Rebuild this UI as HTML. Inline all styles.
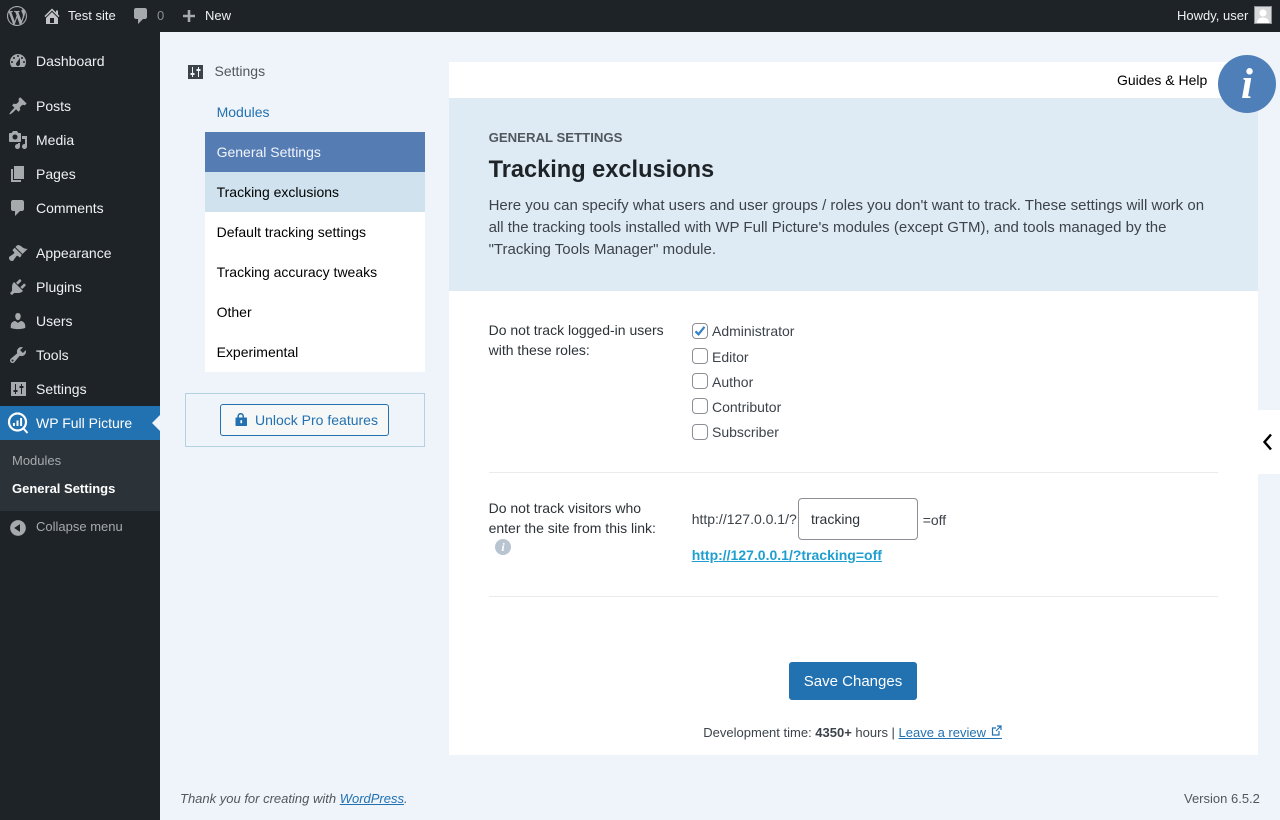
<!DOCTYPE html>
<html><head><meta charset="utf-8"><title>WP Full Picture</title>
<style>
*{box-sizing:border-box}
html,body{margin:0;padding:0}
body{width:1280px;height:820px;position:relative;overflow:hidden;background:#eff4fb;font-family:"Liberation Sans",sans-serif;font-size:14px;color:#3c434a}
.a{position:absolute;white-space:nowrap}
.t{position:absolute;white-space:nowrap;line-height:20px}
svg{position:absolute;display:block}
.bar{color:#f0f0f1;font-size:13px}
.m{color:#f0f0f1;font-size:14px;left:36px}
.r{position:absolute;left:205px;width:220px;height:40px;line-height:40px;padding-left:11.6px;background:#fff;color:#000;font-size:14px}
.cb{position:absolute;left:692px;width:16px;height:16px;border:1px solid #8c8f94;border-radius:4px;background:#fff}
.l{left:712px;color:#3c434a;font-size:14px}
</style></head><body>
<div class="a" style="left:0;top:0;width:1280px;height:32px;background:#1d2327"></div>
<div class="a" style="left:0;top:32px;width:160px;height:788px;background:#1d2327"></div>
<div class="a" style="left:0;top:406px;width:160px;height:34px;background:#2271b1"></div>
<div class="a" style="left:0;top:440px;width:160px;height:71px;background:#2c3338"></div>
<div class="a" style="left:152px;top:415px;width:0;height:0;border:8px solid transparent;border-left:0;border-right-color:#eff4fb"></div>

<svg style="left:7px;top:6px" width="20" height="20" viewBox="0 0 20 20" fill="#a7aaad"><path d="M20 10c0-5.51-4.49-10-10-10C4.48 0 0 4.49 0 10c0 5.52 4.48 10 10 10 5.51 0 10-4.48 10-10zM7.78 15.37L4.37 6.22c.55-.02 1.17-.08 1.17-.08.5-.06.44-1.13-.06-1.11 0 0-1.45.11-2.37.11-.18 0-.37 0-.58-.01C4.12 2.69 6.87 1.11 10 1.11c2.33 0 4.45.87 6.05 2.34-.68-.11-1.65.39-1.65 1.58 0 .74.45 1.36.9 2.1.35.61.55 1.36.55 2.46 0 1.49-1.4 5-1.4 5l-3.03-8.37c.54-.02.82-.17.82-.17.5-.05.44-1.25-.06-1.22 0 0-1.44.12-2.38.12-.87 0-2.33-.12-2.33-.12-.5-.03-.56 1.2-.06 1.22l.92.08 1.26 3.41zM17.41 10c.24-.64.74-1.87.43-4.25.7 1.29 1.05 2.71 1.05 4.25 0 3.29-1.73 6.24-4.4 7.78.97-2.59 1.94-5.2 2.92-7.78zM6.1 18.09C3.12 16.65 1.11 13.53 1.11 10c0-1.3.23-2.48.72-3.59C3.25 10.3 4.67 14.2 6.1 18.09zm4.03-6.63l2.58 6.98c-.86.29-1.76.45-2.71.45-.79 0-1.57-.11-2.29-.33.81-2.38 1.62-4.74 2.42-7.1z"/></svg>
<svg style="left:42px;top:6px" width="20" height="20" viewBox="0 0 20 20" fill="#c3c4c7"><path d="M16 8.5l1.53 1.53-1.06 1.06L10 4.62l-6.47 6.47-1.06-1.06L10 2.5l4 4v-2h2v4zm-6-2.46l6 5.99V18H4v-5.97zM12 17v-5H8v5h4z"/></svg>
<div class="t bar" style="left:68px;top:6px">Test site</div>
<svg style="left:131px;top:6px" width="20" height="20" viewBox="0 0 20 20" fill="#a7aaad"><path d="M5 2h9c1.1 0 2 .9 2 2v7c0 1.1-.9 2-2 2h-2l-5 5v-5H5c-1.1 0-2-.9-2-2V4c0-1.1.9-2 2-2z"/></svg>
<div class="t bar" style="left:157px;top:6px;color:#8c8f94">0</div>
<svg style="left:179px;top:6px" width="20" height="20" viewBox="0 0 20 20" fill="#a7aaad"><path d="M4 8.7h4.7V4h2.6v4.7H16v2.600h-4.7V16H8.700v-4.700H4z"/></svg>
<div class="t bar" style="left:205px;top:6px">New</div>
<div class="t bar" style="left:1177px;top:6px">Howdy, user</div>
<div class="a" style="left:1254px;top:6px;width:18px;height:18px;background:#d8d8d8;border:1px solid #8c8f94;overflow:hidden"></div>
<svg style="left:1255px;top:7px" width="16" height="16" viewBox="0 0 16 16" fill="#fff"><circle cx="8" cy="6" r="3.600"/><path d="M2 16c0-4 3-5.500 6-5.500s6 1.500 6 5.500z"/></svg>

<svg style="left:8px;top:51px" width="20" height="20" viewBox="0 0 20 20" fill="#a7aaad"><path fill-rule="evenodd" d="M3.76 16h12.48c1.1-1.37 1.76-3.11 1.76-5 0-4.42-3.58-8-8-8s-8 3.58-8 8c0 1.89.66 3.63 1.76 5zM10 4c.55 0 1 .45 1 1s-.45 1-1 1-1-.45-1-1 .45-1 1-1zM6 6c.55 0 1 .45 1 1s-.45 1-1 1-1-.45-1-1 .45-1 1-1zm8 0c.55 0 1 .45 1 1s-.45 1-1 1-1-.45-1-1 .45-1 1-1zm-5.370 5.550L12 7v6c0 1.100-.9 2-2 2s-2-.9-2-2c0-.57.24-1.080.63-1.450zM4 10c.55 0 1 .45 1 1s-.45 1-1 1-1-.45-1-1 .45-1 1-1zm12 0c.55 0 1 .45 1 1s-.45 1-1 1-1-.45-1-1 .45-1 1-1z"/></svg>
<div class="t m" style="top:51px">Dashboard</div>
<svg style="left:8px;top:96px" width="20" height="20" viewBox="0 0 20 20" fill="#a7aaad"><path d="M10.440 3.020l1.820-1.820 6.360 6.350-1.830 1.820c-1.050-.68-2.480-.57-3.410.36l-.75.75c-.92.93-1.040 2.350-.35 3.410l-1.830 1.820-2.410-2.410-2.800 2.790c-.42.42-3.380 2.710-3.800 2.290s1.860-3.390 2.280-3.810l2.790-2.790L4.100 9.360l1.830-1.820c1.050.69 2.480.57 3.400-.36l.75-.75c.93-.92 1.050-2.350.36-3.410z"/></svg>
<div class="t m" style="top:96px">Posts</div>
<svg style="left:8px;top:130px" width="20" height="20" viewBox="0 0 20 20" fill="#a7aaad"><path fill-rule="evenodd" d="M13 11V4c0-.55-.45-1-1-1h-1.670L9 1H5L3.670 3H2c-.55 0-1 .45-1 1v7c0 .55.45 1 1 1h10c.55 0 1-.45 1-1zM7 4.500c1.380 0 2.500 1.120 2.500 2.500S8.380 9.500 7 9.500 4.500 8.380 4.500 7 5.620 4.500 7 4.500zM14 6h5v10.500c0 1.380-1.120 2.500-2.500 2.500S14 17.880 14 16.500s1.120-2.500 2.500-2.500c.17 0 .34.02.5.05V9h-3V6zm-4 8.050V13h2v3.500c0 1.380-1.120 2.500-2.500 2.500S7 17.880 7 16.500 8.120 14 9.500 14c.17 0 .34.02.5.05z"/></svg>
<div class="t m" style="top:130px">Media</div>
<svg style="left:8px;top:164px" width="20" height="20" viewBox="0 0 20 20" fill="#a7aaad"><path d="M6 15V2h10v13H6zm-1 1h8v2H3V5h2v11z"/></svg>
<div class="t m" style="top:164px">Pages</div>
<svg style="left:8px;top:198px" width="20" height="20" viewBox="0 0 20 20" fill="#a7aaad"><path d="M5 2h9c1.100 0 2 .9 2 2v7c0 1.100-.9 2-2 2h-2l-5 5v-5H5c-1.100 0-2-.9-2-2V4c0-1.100.9-2 2-2z"/></svg>
<div class="t m" style="top:198px">Comments</div>
<svg style="left:8px;top:243px" width="20" height="20" viewBox="0 0 20 20" fill="#a7aaad"><path d="M14.480 11.060L7.410 3.990l1.500-1.500c.5-.56 2.300-.47 3.510.32 1.210.8 1.430 1.280 2.910 2.100 1.180.64 2.450 1.260 4.450.85zm-.71.71L6.700 4.700 4.930 6.470c-.39.39-.39 1.020 0 1.410l1.060 1.060c.39.39.39 1.030 0 1.420-.6.6-1.430 1.110-2.210 1.690-.35.26-.7.53-1.010.84C1.430 13.230.99 14.200.99 15c0 1.500 1.500 3 3 3 .8 0 1.770-.44 2.110-1.780.31-.31.58-.66.84-1.010.58-.78 1.090-1.610 1.690-2.210.39-.39 1.030-.39 1.420 0l1.060 1.060c.39.39 1.020.39 1.410 0z"/></svg>
<div class="t m" style="top:243px">Appearance</div>
<svg style="left:8px;top:277px" width="20" height="20" viewBox="0 0 20 20" fill="#a7aaad"><path d="M13.110 4.360L9.870 7.600 8 5.730l3.240-3.240c.35-.34 1.050-.2 1.560.32.52.51.66 1.210.31 1.550zm-8 1.770l.91-1.120 9.010 9.010-1.190.84c-.71.71-2.630 1.160-3.820 1.160H6.140L4.900 17.260c-.59.59-1.540.59-2.120 0-.59-.58-.59-1.530 0-2.120l1.240-1.240v-3.880c0-1.130.4-3.190 1.090-3.890zm7.260 3.970l3.240-3.240c.34-.35 1.040-.21 1.550.31.52.51.66 1.210.31 1.550l-3.240 3.250z"/></svg>
<div class="t m" style="top:277px">Plugins</div>
<svg style="left:8px;top:311px" width="20" height="20" viewBox="0 0 20 20" fill="#a7aaad"><path d="M10 9.250c-2.270 0-2.730-3.440-2.730-3.440C7 4.020 7.820 2 9.970 2c2.160 0 2.980 2.020 2.710 3.810 0 0-.41 3.440-2.680 3.440zm0 2.570L12.720 10c2.390 0 4.520 2.330 4.520 4.530v2.490s-3.650 1.130-7.240 1.130c-3.650 0-7.240-1.130-7.240-1.130v-2.490c0-2.250 1.940-4.480 4.470-4.480z"/></svg>
<div class="t m" style="top:311px">Users</div>
<svg style="left:8px;top:345px" width="20" height="20" viewBox="0 0 20 20" fill="#a7aaad"><path fill-rule="evenodd" d="M16.680 9.770c-1.340 1.340-3.300 1.670-4.950.99l-5.410 6.520c-.99.99-2.590.99-3.580 0s-.99-2.590 0-3.570l6.520-5.420c-.68-1.650-.35-3.610.99-4.950 1.280-1.280 3.120-1.620 4.720-1.060l-2.890 2.890 2.820 2.820 2.860-2.870c.53 1.580.18 3.390-1.080 4.650zM3.810 16.210c.4.39 1.040.39 1.430 0 .4-.4.4-1.040 0-1.430-.39-.4-1.030-.4-1.430 0-.39.39-.39 1.030 0 1.430z"/></svg>
<div class="t m" style="top:345px">Tools</div>
<svg style="left:11px;top:382px" width="15" height="14" viewBox="0 0 15 14"><rect width="15" height="14" fill="#a7aaad"/><path d="M4.500 2v10M10.500 2v10" stroke="#1d2327" stroke-width="1"/><path d="M2.500 9h4M8.500 5h4" stroke="#1d2327" stroke-width="2"/></svg>
<div class="t m" style="top:379px">Settings</div>
<svg style="left:7px;top:411px" width="22" height="23" viewBox="0 0 22 23" fill="none" stroke="#fff"><circle cx="10.500" cy="11" r="8.500" stroke-width="2.200"/><path d="M16.500 17.500l4 4.500" stroke-width="2"/><path d="M6.900 15v-3M10.500 15V9.500M14.100 15V7" stroke-width="2"/></svg>
<div class="t m" style="top:413px;color:#fff">WP Full Picture</div>
<div class="t" style="left:12px;top:451px;font-size:13px;color:#a7aaad">Modules</div>
<div class="t" style="left:12px;top:479px;font-size:13px;font-weight:700;color:#fff">General Settings</div>
<svg style="left:8px;top:518px" width="20" height="20" viewBox="0 0 20 20" fill="#a7aaad"><path fill-rule="evenodd" d="M10 2.160c4.330 0 7.840 3.510 7.840 7.840s-3.510 7.840-7.840 7.840S2.160 14.330 2.160 10 5.710 2.160 10 2.160zm2 11.720V6.120L6.180 9.970z"/></svg>
<div class="t" style="left:36px;top:517px;font-size:13px;color:#a7aaad">Collapse menu</div>

<svg style="left:188px;top:65px" width="15" height="14" viewBox="0 0 15 14"><rect width="15" height="14" fill="#3c434a"/><path d="M4.500 2v10M10.500 2v10" stroke="#eff4fb" stroke-width="1"/><path d="M2.500 9h4M8.500 5h4" stroke="#eff4fb" stroke-width="2"/></svg>
<div class="t" style="left:214.500px;top:61px;color:#50575e">Settings</div>
<div class="t" style="left:216.600px;top:102px;color:#2271b1">Modules</div>
<div class="r" style="top:132px;background:#567cb4;color:#f0f4fa">General Settings</div>
<div class="r" style="top:172px;background:#cfe2ee">Tracking exclusions</div>
<div class="r" style="top:212px">Default tracking settings</div>
<div class="r" style="top:252px">Tracking accuracy tweaks</div>
<div class="r" style="top:292px">Other</div>
<div class="r" style="top:332px">Experimental</div>
<div class="a" style="left:185px;top:393px;width:240px;height:54px;border:1px solid #b2d2e2"></div>
<div class="a" style="left:220px;top:404px;width:169px;height:32px;border:1px solid #2271b1;border-radius:3px;background:#f6f7f7"></div>
<svg style="left:235px;top:413px" width="13" height="13" viewBox="0 0 13 13"><rect x=".5" y="4.500" width="11.500" height="8.500" rx=".6" fill="#2271b1"/><path d="M3.200 5V3.200a2.500 2.500 0 0 1 5 0V5" fill="none" stroke="#2271b1" stroke-width="1.500"/><rect x="5.400" y="7.200" width="1.700" height="3" fill="#fff"/></svg>
<div class="t" style="left:255px;top:410px;color:#2271b1">Unlock Pro features</div>

<div class="a" style="left:449px;top:62px;width:809px;height:693px;background:#fff"></div>
<div class="a" style="left:449px;top:98px;width:809px;height:193px;background:#dfebf4"></div>
<div class="t" style="left:1117px;top:70px;color:#000">Guides &amp; Help</div>
<div class="a" style="left:1218px;top:55px;width:58px;height:58px;border-radius:50%;background:#4f7fb8"></div>
<div class="a" style="left:1218px;top:56px;width:58px;height:58px;text-align:center;font:italic 700 43px/58px 'Liberation Serif',serif;color:#fff">i</div>
<div class="t" style="left:488.600px;top:128px;font-size:13.200px;font-weight:700;color:#50575e">GENERAL SETTINGS</div>
<div class="t" style="left:488.600px;top:155px;font-size:23.600px;line-height:30px;font-weight:700;color:#1d2327">Tracking exclusions</div>
<div class="a" style="left:488.600px;top:195px;width:729px;font-size:15px;line-height:22px;color:#3c434a">Here you can specify what users and user groups / roles you don't want to track. These settings will work on<br>all the tracking tools installed with WP Full Picture's modules (except GTM), and tools managed by the<br>"Tracking Tools Manager" module.</div>

<div class="t" style="left:488.600px;top:321px;line-height:19.600px;color:#2c3338">Do not track logged-in users<br>with these roles:</div>
<div class="cb" style="top:323px;border-color:#8c8f94"></div>
<svg style="left:692px;top:323px" width="16" height="16" viewBox="0 0 16 16"><path d="M3.500 8.300l3 3 6-7.500" fill="none" stroke="#3582c4" stroke-width="2.200"/></svg>
<div class="t l" style="top:321px">Administrator</div>
<div class="cb" style="top:348px"></div><div class="t l" style="top:347px">Editor</div>
<div class="cb" style="top:373px"></div><div class="t l" style="top:372px">Author</div>
<div class="cb" style="top:398px"></div><div class="t l" style="top:397px">Contributor</div>
<div class="cb" style="top:424px"></div><div class="t l" style="top:422px">Subscriber</div>
<div class="a" style="left:489px;top:472px;width:729px;height:1px;background:#eaeaea"></div>

<div class="t" style="left:488.600px;top:498px;color:#2c3338">Do not track visitors who<br>enter the site from this link:</div>
<div class="a" style="left:495px;top:539px;width:16px;height:16px;border-radius:50%;background:#b8c4d0;color:#fff;font:italic 700 12px/16px 'Liberation Serif',serif;text-align:center">i</div>
<div class="t" style="left:691.700px;top:509px;color:#3c434a">http://127.0.0.1/?</div>
<div class="a" style="left:798px;top:498px;width:120px;height:42px;border:1px solid #8c8f94;border-radius:4px;background:#fff;padding-left:12px;line-height:40px;color:#2c3338">tracking</div>
<div class="t" style="left:922.700px;top:510px;color:#3c434a">=off</div>
<div class="t" style="left:691.700px;top:545px;font-weight:700;color:#1f9fd0;text-decoration:underline">http://127.0.0.1/?tracking=off</div>
<div class="a" style="left:489px;top:596px;width:729px;height:1px;background:#eaeaea"></div>

<div class="a" style="left:789px;top:662px;width:128px;height:38px;line-height:40px;text-align:center;background:#2271b1;border-radius:3px;color:#fff;font-size:15px">Save Changes</div>
<div class="t" style="left:703.300px;top:723px;font-size:13px;color:#3c434a">Development time: <b>4350+</b> hours | <span style="color:#2271b1;text-decoration:underline">Leave a review</span></div>
<div class="a" style="left:986px;top:738px;width:16px;height:1px;background:#2271b1"></div>
<svg style="left:991px;top:725px" width="11" height="11" viewBox="0 0 11 11" fill="none" stroke="#2271b1" stroke-width="1.200"><path d="M8 6v4H1.500V3H5M6 1h4v4M10 1L5 6"/></svg>

<div class="a" style="left:1258px;top:410px;width:22px;height:64px;background:#fff"></div>
<svg style="left:1261px;top:432px" width="13" height="20" viewBox="0 0 13 20"><path d="M10 2.500L3.500 10l6.500 7.500" fill="none" stroke="#000" stroke-width="2.400"/></svg>

<div class="t" style="left:180px;top:789px;font-size:13px;font-style:italic;color:#50575e">Thank you for creating with <span style="color:#2271b1;text-decoration:underline">WordPress</span>.</div>
<div class="t" style="left:1184px;top:789px;font-size:13px;color:#50575e">Version 6.5.2</div>
</body></html>
